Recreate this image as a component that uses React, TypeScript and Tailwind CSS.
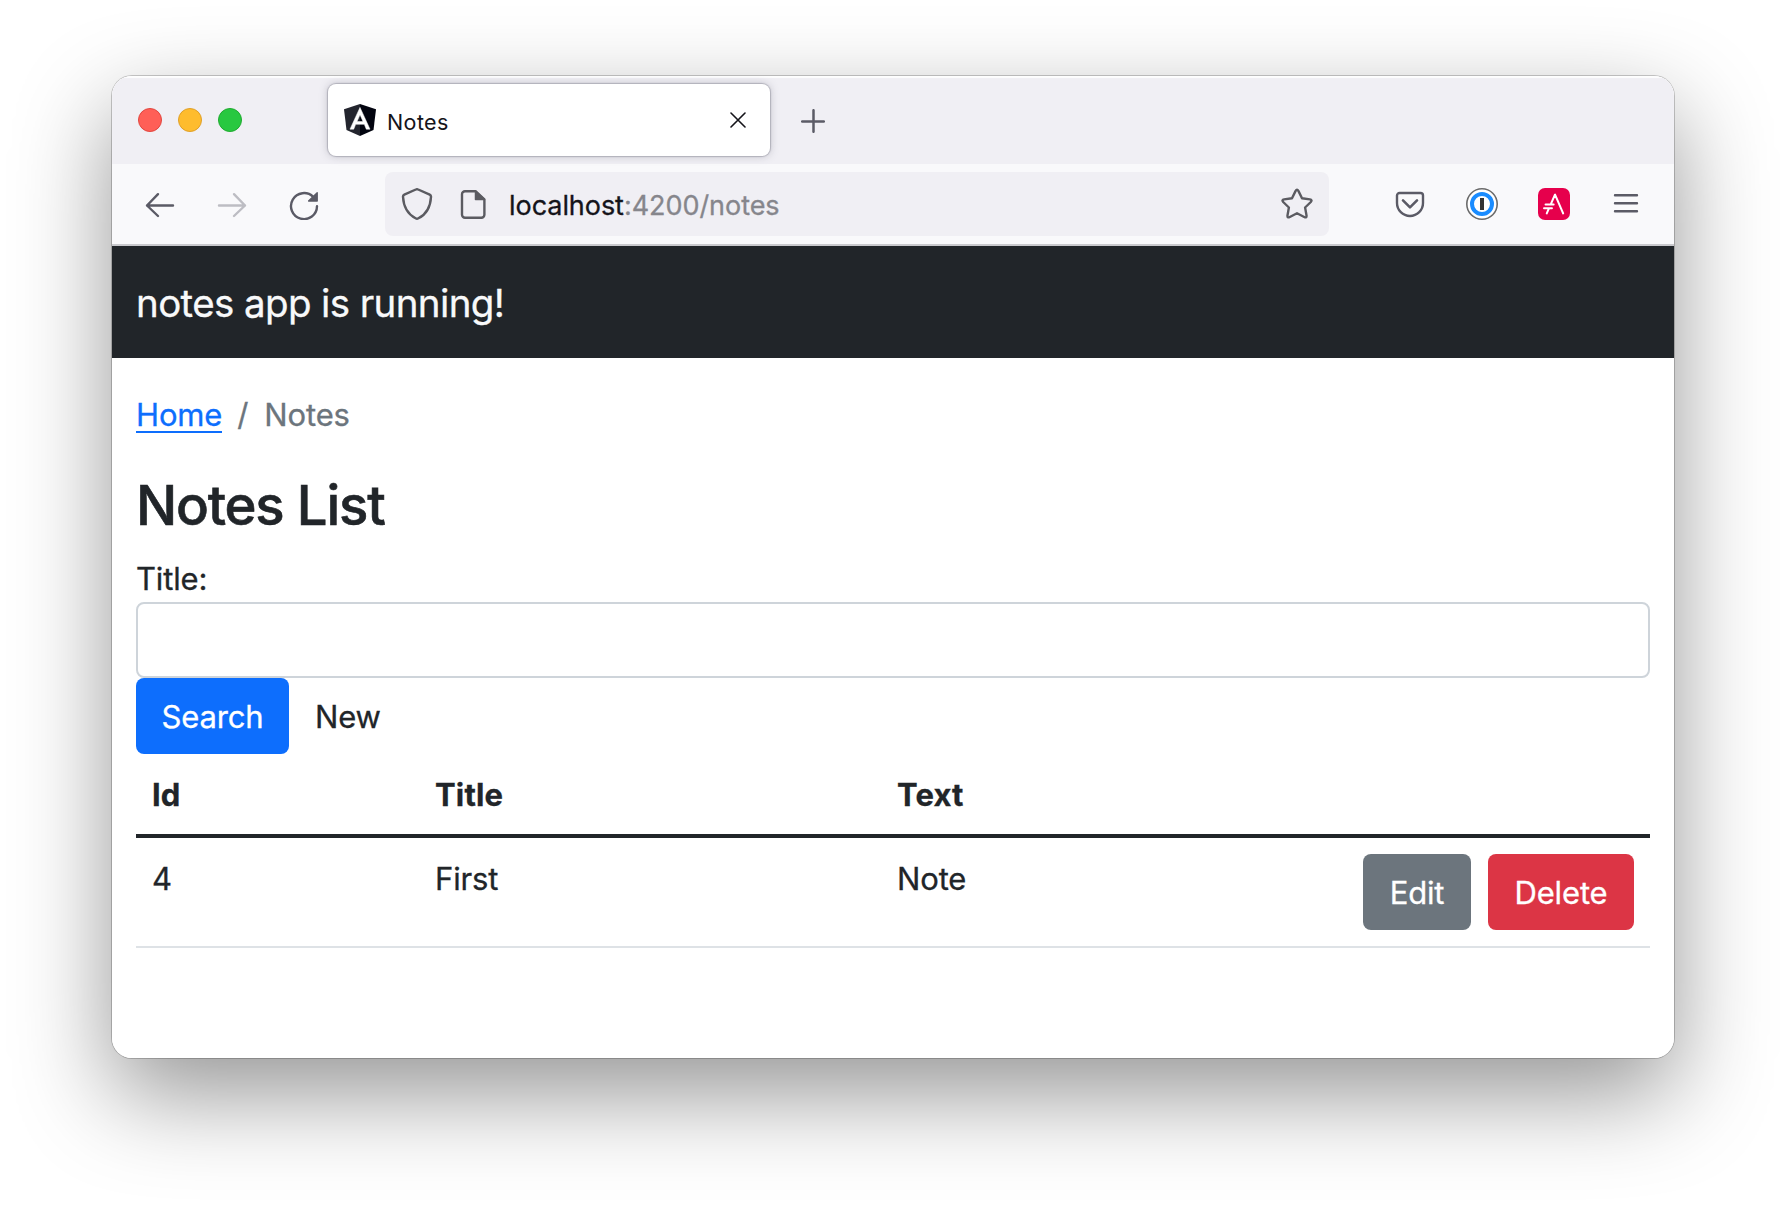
import type { ReactNode } from "react";

function Icon({ children, className = "" }: { children: ReactNode; className?: string }) {
  return (
    <svg
      width="32"
      height="32"
      viewBox="0 0 32 32"
      fill="none"
      strokeLinecap="round"
      strokeLinejoin="round"
      className={`block shrink-0 ${className}`}
    >
      {children}
    </svg>
  );
}

function TabStrip() {
  return (
    <div className="flex h-[88px] items-start bg-[#f0eff4] pt-2 shadow-[inset_0_2px_1px_rgba(255,255,255,0.9)]">
      <div className="ml-[26px] flex h-[72px] items-center gap-4">
        <span className="size-6 rounded-full border border-[#e2463f] bg-[#ff5f57]" />
        <span className="size-6 rounded-full border border-[#e0a028] bg-[#febc2e]" />
        <span className="size-6 rounded-full border border-[#1fab2f] bg-[#28c840]" />
      </div>
      <div className="ml-[86px] flex h-[72px] w-[442px] items-center rounded-lg bg-white pl-4 shadow-[0_0_1px_1px_rgba(128,128,142,0.45),0_0_8px_rgba(128,128,142,0.45)]">
        <svg width="32" height="32" viewBox="0 0 32 32" className="block shrink-0">
          <path d="M16 0 0 5.3 2.5 26 16 32z" fill="#23252e" />
          <path d="M16 0 32 5.3 29.5 26 16 32z" fill="#02040f" />
          <path d="M16 3.4 6 25.2h3.7l2-4.9h8.6l2 4.9H26zm0 7.3 3 6.9h-6z" fill="#fff" stroke="#fff" strokeWidth="0.5" />
        </svg>
        <span className="ml-[11px] mt-[3px] text-[21.5px] leading-7 tracking-[0.4px] text-[#15141a]">Notes</span>
        <svg width="16" height="16" viewBox="0 0 16 16" className="ml-auto mr-6 block" stroke="#15141a" strokeWidth="1.6" strokeLinecap="round">
          <path d="m1 1 14 14M15 1 1 15" />
        </svg>
      </div>
      <svg width="24" height="24" viewBox="0 0 24 24" className="ml-[31px] mt-[25px] block" stroke="#5b5b66" strokeWidth="2.5" strokeLinecap="round">
        <path d="M12.5 1.2v21.6M1.2 12.5h21.6" />
      </svg>
    </div>
  );
}

function Toolbar() {
  return (
    <div className="flex h-[82px] items-center border-b-2 border-[#c9c9cd] bg-[#f9f9fb] pl-8">
      <Icon>
        <path d="M3 17.5h26M14 6.2 3 17.5 14 28" stroke="#5b5b66" strokeWidth="2.4" />
      </Icon>
      <Icon className="ml-10">
        <path d="M3 17.5h26M18 6.2l11 11.3L18 28" stroke="#bdbdc3" strokeWidth="2.4" />
      </Icon>
      <Icon className="ml-10">
        <path d="M29 18.2A13 13 0 1 1 25.2 8.9" stroke="#5b5b66" strokeWidth="2.4" />
        <path d="M29.2 4.8v8.2h-8.6z" fill="#5b5b66" stroke="#5b5b66" strokeWidth="1.4" />
      </Icon>
      <div className="ml-[65px] flex h-16 w-[944px] items-center rounded-lg bg-[#f0eff4] pl-4">
        <Icon>
          <path
            d="M14.8 1.5q1.2-.6 2.4 0l11.5 5.1q1.4.7 1.3 2.2c-.5 9.2-4.2 17.2-12.6 21.5q-1.4.8-2.8 0C6.2 26 2.5 18 2 8.8Q1.9 7.3 3.3 6.6z"
            stroke="#5b5b61"
            strokeWidth="2.4"
          />
        </Icon>
        <Icon className="ml-6">
          <path d="M18.5 3.2H8A3 3 0 0 0 5 6.2v20.6a3 3 0 0 0 3 3h16.4a3 3 0 0 0 3-3V11.5z" stroke="#5b5b61" strokeWidth="2.4" />
          <path d="M18.5 3v8.5h9z" fill="#5b5b61" stroke="#5b5b61" strokeWidth="1.5" />
        </Icon>
        <span className="ml-5 mt-[3px] text-[27px] leading-9 tracking-[-0.05px] text-[#15141a] [-webkit-text-stroke:0.3px]">
          localhost<span className="text-[#86868c]">:4200/notes</span>
        </span>
        <Icon className="ml-auto mr-4">
          <path
            d="M14.5 3.1q1.5-2.6 3 0l3.5 7.1 7.9 1.2q2.7.5.9 2.6l-5.7 5.5 1.4 7.9q.3 2.9-2.3 1.6L16 25.3 8.8 29q-2.6 1.3-2.3-1.6l1.4-7.9L2.2 14q-1.8-2.1.9-2.6l7.9-1.2z"
            stroke="#5b5b61"
            strokeWidth="2.4"
          />
        </Icon>
      </div>
      <div className="ml-[65px] flex gap-10">
        <Icon>
          <path d="M5.5 5h21A2.5 2.5 0 0 1 29 7.5V15a13 13 0 0 1-26 0V7.5A2.5 2.5 0 0 1 5.5 5z" stroke="#5b5b66" strokeWidth="2.4" />
          <path d="m9 12.3 7 7 7-7" stroke="#5b5b66" strokeWidth="2.6" />
        </Icon>
        <Icon>
          <circle cx="16" cy="16" r="15.2" fill="#fff" stroke="#6b6b6b" strokeWidth="1.6" />
          <circle cx="16" cy="16" r="10" stroke="#1a8cff" strokeWidth="4" />
          <path d="M14 10h4v12h-4z" fill="#333" />
        </Icon>
        <Icon>
          <rect width="32" height="32" rx="7" fill="#e6004c" />
          <path d="M25.2 25.5 17 6.5l-4.3 10M7.5 16.5h8.2M6 20.3h8M10.9 20.5l-2.2 5" stroke="#fff" strokeWidth="1.9" />
        </Icon>
        <Icon>
          <path d="M5 7.2h22M5 15.2h22M5 23.2h22" stroke="#5b5b66" strokeWidth="2.4" />
        </Icon>
      </div>
    </div>
  );
}

function NotesPage() {
  return (
    <main className="flex flex-col px-6 pt-[33px] text-[31px] leading-[48px] tracking-[-0.15px] [-webkit-text-stroke:0.3px]">
      <nav className="flex h-12">
        <a className="h-[42px] border-b-2 border-[#0d6efd] text-[#0d6efd]">Home</a>
        <span className="ml-[15px] text-[#6c757d]">/</span>
        <span className="ml-4 text-[#6c757d]">Notes</span>
      </nav>
      <h2 className="mt-[33px] text-[54.5px] font-medium leading-[66px] tracking-[-1.2px] [-webkit-text-stroke:0.6px]">Notes List</h2>
      <label className="mt-[18px] leading-[46px]">Title:</label>
      <input className="h-[76px] w-full rounded-lg border-2 border-[#ced4da] bg-white px-6 outline-none" />
      <div className="flex h-[76px]">
        <button className="w-[153px] rounded-lg bg-[#0d6efd] pt-0.5 text-white">Search</button>
        <button className="ml-[26px] pt-0.5">New</button>
      </div>
      <table className="w-full table-fixed border-collapse text-left">
        <colgroup>
          <col className="w-[283px]" />
          <col className="w-[462px]" />
          <col className="w-[400px]" />
          <col />
        </colgroup>
        <thead>
          <tr className="h-[84px] align-top">
            {["Id", "Title", "Text", ""].map((heading) => (
              <th key={heading} className="p-0 font-bold tracking-[0.15px]">
                <div className="h-[84px] border-b-4 border-[#212529] pl-4 pt-[17px]">{heading}</div>
              </th>
            ))}
          </tr>
        </thead>
        <tbody>
          <tr className="align-top">
            {["4", "First", "Note"].map((value) => (
              <td key={value} className="p-0">
                <div className="h-[110px] border-b-2 border-[#dee2e6] pl-4 pt-[17px]">{value}</div>
              </td>
            ))}
            <td className="p-0">
              <div className="flex h-[110px] justify-end gap-[17px] border-b-2 border-[#dee2e6] pr-4 pt-4">
                <button className="h-[76px] w-[108px] rounded-lg bg-[#6c757d] pt-0.5 text-white">Edit</button>
                <button className="h-[76px] w-[146px] rounded-lg bg-[#dc3545] pt-0.5 text-white">Delete</button>
              </div>
            </td>
          </tr>
        </tbody>
      </table>
    </main>
  );
}

export default function App() {
  return (
    <div className="h-[1206px] w-[1786px] overflow-hidden bg-white pl-28 pt-[76px] font-['Inter','Liberation_Sans',sans-serif] text-[#212529]">
      <div className="h-[982px] w-[1562px] rounded-[20px] shadow-[0_0_0_1px_rgba(0,0,0,0.2),0_36px_96px_rgba(0,0,0,0.42)]">
        <div className="h-full overflow-hidden rounded-[20px] bg-white">
          <TabStrip />
          <Toolbar />
          <header className="h-28 bg-[#212529] px-6 pt-8 text-[38.5px] leading-[50px] tracking-[-0.62px] text-[#f8f9fa] [-webkit-text-stroke:0.3px]">
            notes app is running!
          </header>
          <NotesPage />
        </div>
      </div>
    </div>
  );
}
